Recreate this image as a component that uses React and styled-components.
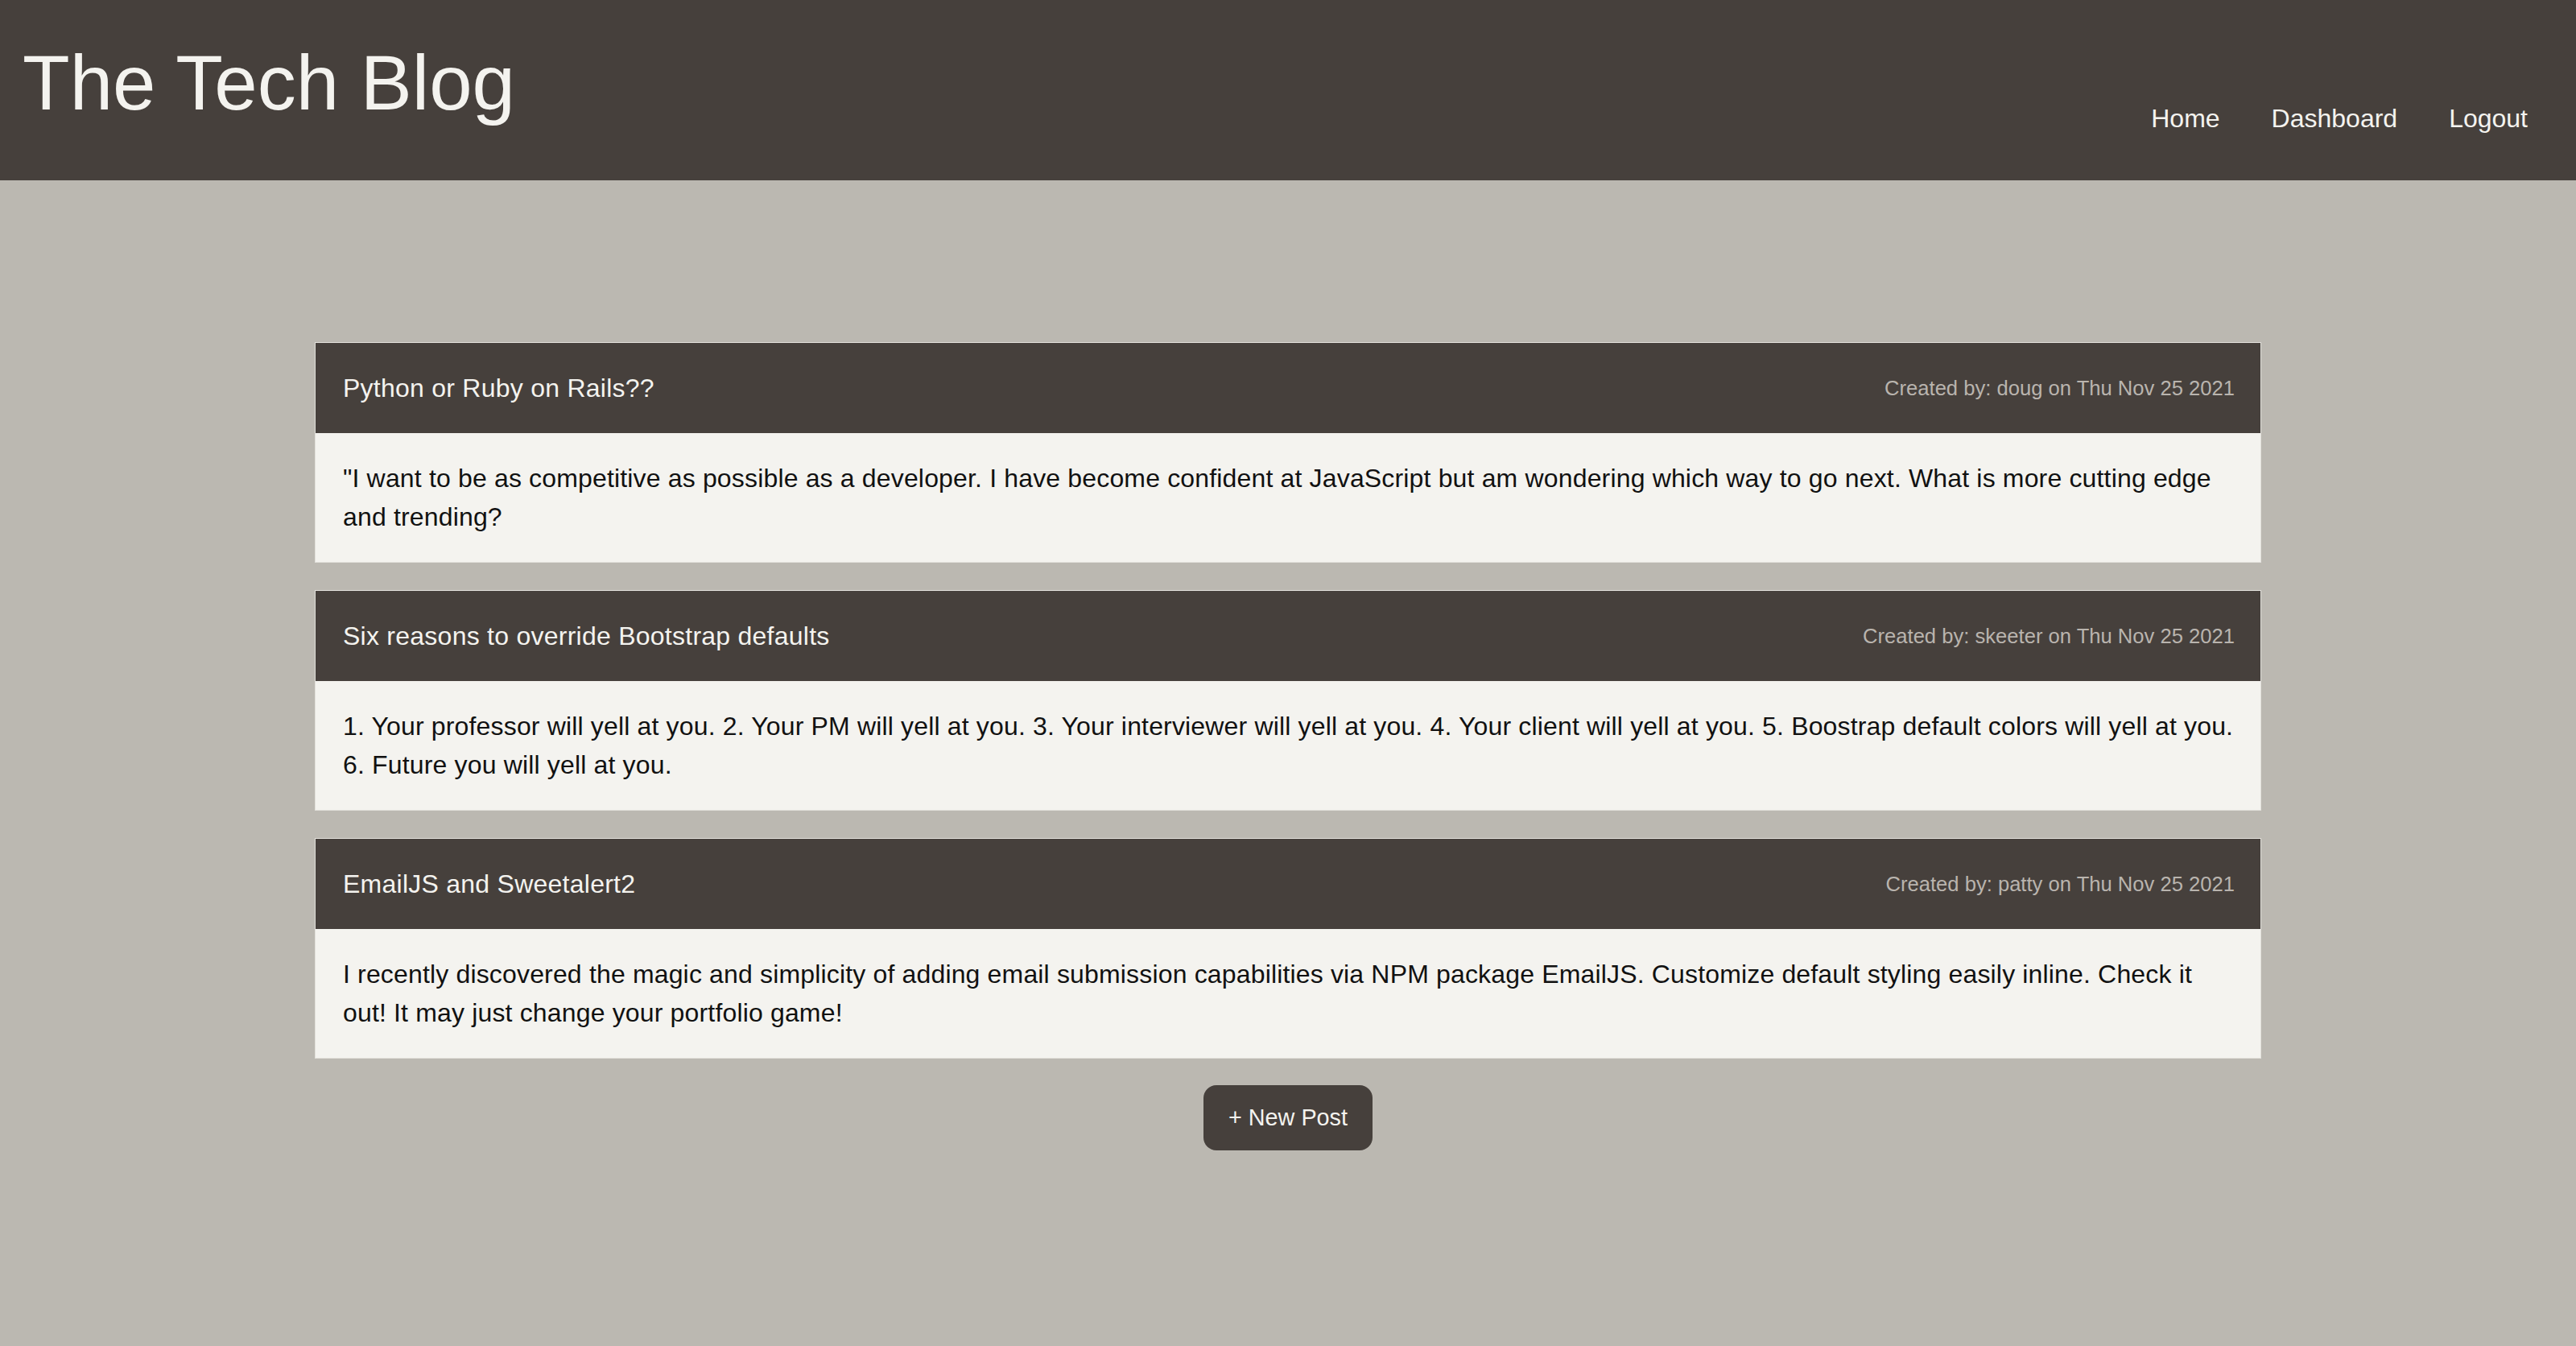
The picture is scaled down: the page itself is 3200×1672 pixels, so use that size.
import React from 'react';
import styled, { createGlobalStyle } from 'styled-components';

// Styles
const GlobalStyle = createGlobalStyle`
  html, body {
    margin: 0;
    padding: 0;
    background: #bbb8b1;
    font-family: "Liberation Sans", Arial, sans-serif;
  }
`

const Page = styled.div`
  min-height: 100vh;
  background: #bbb8b1;
`

const Header = styled.header`
  height: 224px;
  box-sizing: border-box;
  padding: 0 28px;
  background: #46403c;
  display: flex;
  justify-content: space-between;
  align-items: flex-start;
`

const Brand = styled.h1`
  margin: 55px 0 0 0;
  font-size: 96px;
  line-height: 96px;
  font-weight: 400;
  color: #f4f3ef;
`

const Nav = styled.nav`
  display: flex;
  margin-top: 131px;
`

const NavLink = styled.a`
  padding: 0 32px;
  font-size: 32px;
  line-height: 32px;
  color: #f4f3ef;
  text-decoration: none;
  cursor: pointer;
`

const Main = styled.main`
  max-width: 2418px;
  margin: 0 auto;
  padding: 201px 0 80px 0;
  display: flex;
  flex-direction: column;
  align-items: center;
`

const Card = styled.article`
  width: 100%;
  box-sizing: border-box;
  border: 1px solid #e2e0db;
  margin-bottom: 34px;

  &:last-of-type {
    margin-bottom: 33px;
  }
`

const CardHeader = styled.div`
  display: flex;
  justify-content: space-between;
  align-items: center;
  padding: 32px 32px 32px 34px;
  background: #46403c;
`

const Title = styled.h2`
  margin: 0;
  font-size: 32px;
  line-height: 48px;
  font-weight: 400;
  letter-spacing: 0.25px;
  color: #f4f3ef;
`

const Meta = styled.span`
  font-size: 25.6px;
  line-height: 1.5;
  color: #b9b4ae;
`

const CardBody = styled.div`
  padding: 32px 32px 32px 34px;
  background: #f4f3ef;
  font-size: 32px;
  line-height: 48px;
  letter-spacing: 0.16px;
  color: #111;
`

const NewPostButton = styled.button`
  border: none;
  border-radius: 16px;
  padding: 19px 31px;
  background: #46403c;
  color: #f4f3ef;
  font-family: "Liberation Sans", Arial, sans-serif;
  font-size: 28.8px;
  line-height: 1.5;
  cursor: pointer;
`

const posts = [
  {
    title: 'Python or Ruby on Rails??',
    author: 'doug',
    date: 'Thu Nov 25 2021',
    body: '"I want to be as competitive as possible as a developer. I have become confident at JavaScript but am wondering which way to go next. What is more cutting edge and trending?',
  },
  {
    title: 'Six reasons to override Bootstrap defaults',
    author: 'skeeter',
    date: 'Thu Nov 25 2021',
    body: '1. Your professor will yell at you. 2. Your PM will yell at you. 3. Your interviewer will yell at you. 4. Your client will yell at you. 5. Boostrap default colors will yell at you. 6. Future you will yell at you.',
  },
  {
    title: 'EmailJS and Sweetalert2',
    author: 'patty',
    date: 'Thu Nov 25 2021',
    body: 'I recently discovered the magic and simplicity of adding email submission capabilities via NPM package EmailJS. Customize default styling easily inline. Check it out! It may just change your portfolio game!',
  },
]

const Post = ({ post }) => {
  const { title, author, date, body } = post

  return (
    <Card>
      <CardHeader>
        <Title>{title}</Title>
        <Meta>Created by: {author} on {date}</Meta>
      </CardHeader>
      <CardBody>{body}</CardBody>
    </Card>
  )
}

const App = () => {
  return (
    <Page>
      <GlobalStyle />
      <Header>
        <Brand>The Tech Blog</Brand>
        <Nav>
          <NavLink>Home</NavLink>
          <NavLink>Dashboard</NavLink>
          <NavLink>Logout</NavLink>
        </Nav>
      </Header>

      <Main>
        {posts.map((post) => (
          <Post key={post.title} post={post} />
        ))}
        <NewPostButton>+ New Post</NewPostButton>
      </Main>
    </Page>
  )
}

export default App;
